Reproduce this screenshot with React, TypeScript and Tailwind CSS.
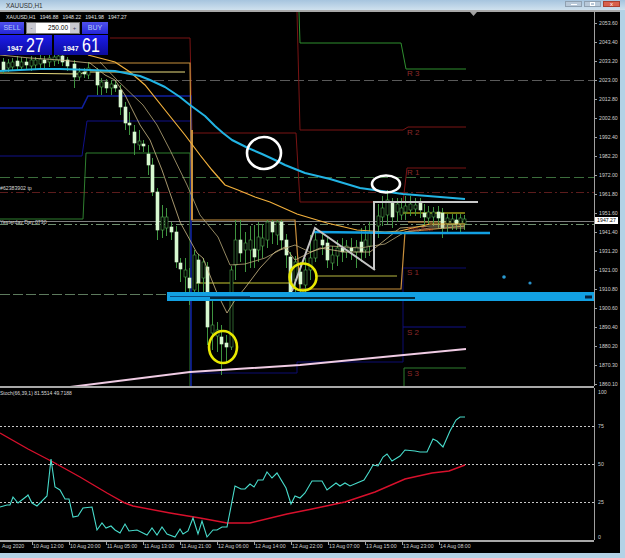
const font = { fontFamily: '"Liberation Sans", Arial, sans-serif' };

// x, body top, body bottom, high, low, bull
const candles: number[][] = [
  [3, 62, 70, 58, 74, 0], [8, 63, 68, 59, 72, 1], [12, 62, 67, 58, 71, 1], [17, 61, 66, 56, 71, 0], [21, 62, 67, 57, 70, 1],
  [26, 62, 65, 58, 70, 0], [31, 60, 66, 56, 71, 1], [35, 60, 65, 57, 70, 1], [40, 59, 64, 55, 69, 1], [44, 60, 63, 56, 68, 0],
  [49, 58, 62, 55, 67, 1], [54, 57, 61, 54, 66, 1], [58, 56, 60, 53, 64, 1], [62, 56, 62, 54, 66, 0], [67, 60, 66, 57, 71, 0],
  [74, 64, 77, 60, 88, 0], [79, 72, 77, 68, 80, 1], [84, 72, 74, 68, 78, 0], [88, 68, 75, 62, 79, 1], [97, 72, 85, 68, 95, 0],
  [101, 82, 87, 78, 95, 1], [106, 82, 88, 79, 93, 0], [111, 84, 88, 80, 95, 1], [115, 85, 88, 81, 92, 0], [120, 90, 107, 85, 115, 0],
  [125, 107, 123, 102, 130, 0], [129, 123, 125, 112, 135, 0], [134, 132, 143, 125, 155, 0], [139, 141, 145, 130, 150, 1], [143, 144, 146, 140, 152, 0],
  [148, 154, 165, 145, 175, 0], [152, 165, 192, 158, 196, 0], [157, 192, 230, 188, 240, 0], [162, 217, 230, 205, 238, 1], [166, 217, 228, 208, 236, 1],
  [171, 227, 232, 222, 240, 0], [176, 232, 262, 226, 268, 0], [180, 263, 269, 258, 282, 0], [185, 270, 277, 258, 300, 1], [189, 278, 288, 268, 305, 0],
  [194, 255, 290, 250, 296, 1], [198, 260, 283, 254, 292, 0], [203, 262, 278, 258, 296, 1], [207, 267, 327, 262, 345, 0], [212, 325, 333, 300, 350, 1],
  [217, 330, 336, 322, 352, 1], [221, 337, 344, 325, 375, 0], [226, 343, 347, 335, 362, 0], [231, 270, 347, 266, 350, 1], [235, 240, 265, 220, 280, 1],
  [240, 240, 253, 220, 262, 0], [245, 243, 250, 232, 272, 1], [250, 240, 250, 226, 268, 1], [254, 249, 257, 225, 268, 0], [258, 237, 250, 222, 262, 1],
  [262, 238, 246, 224, 258, 1], [267, 222, 240, 220, 248, 1], [272, 222, 232, 220, 244, 0], [277, 222, 235, 220, 245, 1], [281, 222, 240, 220, 250, 0],
  [286, 240, 255, 234, 268, 0], [290, 257, 292, 252, 296, 0], [295, 262, 280, 256, 296, 1], [300, 272, 284, 262, 296, 0], [305, 270, 285, 258, 296, 1],
  [310, 258, 270, 235, 280, 1], [315, 240, 258, 232, 262, 1], [322, 240, 245, 232, 255, 0], [327, 243, 260, 236, 268, 0], [332, 255, 263, 246, 270, 1],
  [337, 248, 256, 240, 266, 1], [342, 248, 252, 238, 262, 0], [346, 246, 252, 240, 258, 1], [351, 248, 251, 238, 260, 0], [356, 247, 252, 240, 268, 1],
  [361, 242, 252, 228, 262, 0], [365, 240, 250, 226, 258, 1], [369, 232, 246, 222, 256, 1], [378, 216, 226, 204, 238, 1], [382, 208, 217, 196, 226, 1],
  [387, 200, 215, 190, 224, 1], [392, 202, 217, 198, 228, 0], [397, 204, 212, 198, 222, 1], [401, 208, 215, 198, 220, 1], [405, 206, 212, 196, 220, 1],
  [410, 204, 210, 196, 216, 1], [415, 205, 209, 198, 216, 1], [420, 202, 210, 198, 218, 0], [424, 213, 217, 204, 226, 0], [428, 212, 218, 206, 224, 1],
  [433, 212, 217, 207, 226, 1], [438, 212, 218, 206, 228, 0], [442, 213, 228, 208, 238, 0], [447, 218, 224, 214, 232, 1], [452, 219, 224, 214, 230, 1],
  [456, 220, 224, 214, 230, 0], [460, 218, 224, 214, 232, 1], [464, 219, 224, 215, 230, 1],
];

const maCyan = '0,71 20,70 40,69 60,69 90,70 115,71 130,74 140,76 150,80 165,87 180,97 190,105 205,116 215,126 223,133 232,140 248,148 262,154 275,160 285,165 305,173 330,179 360,188 403,194 465,199';
const maOrange = '88,55 115,62 130,72 145,85 165,110 185,135 200,155 212,170 225,185 238,190 255,197 270,202 297,214 327,223 357,230 385,232 400,231 430,224 465,224';
const maFast = '0,55 30,58 60,60 90,63 105,75 115,80 125,95 140,125 150,140 162,170 180,222 197,253 203,258 217,293 227,313 235,300 245,288 260,268 275,252 285,247 295,260 305,255 320,248 345,252 370,252 385,240 400,228 430,226 465,226';
const maSlow = '100,62 117,80 143,105 157,125 170,150 187,185 200,215 218,237 230,265 245,264 265,258 280,250 295,245 310,252 330,246 360,248 385,244 405,232 430,228 465,228';

const stochMain = '0,507 7,505 10,505 13,497 18,503 27,496 28,495 32,503 37,506 47,496 51,459 55,487 60,490 65,499 69,499 73,517 78,516 83,508 92,507 97,530 102,523 106,528 111,526 115,530 120,533 125,524 129,531 137,530 147,535 152,528 157,535 162,527 167,534 175,537 180,529 183,534 188,531 193,518 198,534 202,521 207,537 213,530 217,530 222,527 227,527 235,486 241,489 245,489 250,484 254,487 258,480 263,480 267,472 272,478 277,473 286,488 291,504 295,496 300,498 305,493 312,481 322,481 327,490 336,483 340,486 345,483 350,486 357,483 364,480 369,472 373,465 378,466 383,457 387,454 392,461 400,456 405,450 415,451 420,452 427,452 433,439 437,441 443,447 450,431 456,420 460,417 465,417';
const stochSignal = '0,433 28,449 53,462 80,477 107,493 125,503 133,506 170,513 200,518 227,523 250,523 287,514 312,509 345,502 375,492 405,479 432,473 449,471 465,465';

const prices = ['2053.60', '2043.40', '2033.20', '2023.00', '2012.80', '2002.60', '1992.40', '1982.20', '1972.00', '1961.80', '1951.60', '1941.40', '1931.20', '1921.00', '1910.80', '1900.60', '1890.40', '1880.20', '1870.30', '1860.10'];
const times = ['10 Aug 12:00', '10 Aug 20:00', '11 Aug 05:00', '11 Aug 13:00', '11 Aug 21:00', '12 Aug 06:00', '12 Aug 14:00', '12 Aug 22:00', '13 Aug 07:00', '13 Aug 15:00', '13 Aug 23:00', '14 Aug 08:00'];
const pivots = [['R 3', 76], ['R 2', 135], ['R 1', 175], ['S 1', 275], ['S 2', 335], ['S 3', 376]] as const;

function PriceChart() {
  return (
    <svg className="block w-full h-full" viewBox="0 12 594 374" fill="none">
      {/* horizontal levels */}
      <line x1="0" y1="80.5" x2="594" y2="80.5" stroke="#5a5a5a" strokeWidth="1" strokeDasharray="10 4" />
      <line x1="0" y1="177.5" x2="594" y2="177.5" stroke="#3c6e3c" strokeWidth="1" strokeDasharray="10 4" />
      <line x1="0" y1="192.5" x2="594" y2="192.5" stroke="#5c1c1c" strokeWidth="1" strokeDasharray="8 3 2 3" />
      <line x1="0" y1="221.5" x2="594" y2="221.5" stroke="#808080" strokeWidth="1" />
      <line x1="0" y1="224.5" x2="594" y2="224.5" stroke="#6f8f6f" strokeWidth="1" strokeDasharray="8 3 2 3" />
      <line x1="0" y1="294.5" x2="170" y2="294.5" stroke="#5d7a5d" strokeWidth="1" strokeDasharray="10 3" />

      {/* pivot steps */}
      <g strokeWidth="1">
        <polyline points="0,219 83,219 86,153 190,153 190,386" stroke="#2f7f2f" />
        <polyline points="299,12 300,43 401,43 406,69 466,69" stroke="#2f8f2f" />
        <polyline points="404,386 404,368 466,368" stroke="#2f7f2f" />
        <polyline points="110,38 190,38 192,133 296,133 300,202 403,202 407,168 466,168" stroke="#7a1414" />
        <polyline points="297,12 300,130 403,130 408,127 466,127" stroke="#7a1414" />
        <polyline points="0,108 82,108 88,96 191,96 191,386" stroke="#1020a0" strokeWidth="1.6" />
        <polyline points="0,156 82,156 87,121 190,121" stroke="#10108a" />
        <polyline points="191,373 297,373 297,362 403,362 403,268 466,268" stroke="#0c0c70" />
        <polyline points="403,327 466,327" stroke="#10108a" />
        <polyline points="88,63 190,63 192,220 295,220 300,289 401,289 405,232 465,226" stroke="#c88f3c" strokeWidth="1.2" />
        <polyline points="192,130 192,220" stroke="#c88f3c" strokeWidth="2" />
        <polyline points="0,73 80,74 85,72 185,72" stroke="#ecdf80" />
        <polyline points="193,283 290,283" stroke="#c8c832" strokeWidth="1.2" />
        <polyline points="315,276 397,276" stroke="#b8b840" strokeWidth="1.2" />
        <polyline points="403,213 465,213" stroke="#e8e820" strokeWidth="1.2" />
        <polyline points="408,222 465,222" stroke="#d89a40" />
      </g>

      {/* bars */}
      {candles.map(([x, top, bot, hi, lo, bull]) => (
        <g key={x}>
          <line x1={x + 0.5} y1={hi} x2={x + 0.5} y2={lo} stroke="#3f9440" />
          <rect x={x - 1} y={top} width="3" height={bot - top} fill={bull ? '#000' : '#d8f8d0'} stroke={bull ? '#4ea64e' : '#d8f8d0'} strokeWidth="0.6" />
        </g>
      ))}

      {/* moving averages */}
      <polyline points={maSlow} stroke="#b8a878" strokeWidth="0.8" />
      <polyline points={maFast} stroke="#d0bc88" strokeWidth="0.8" />
      <polyline points={maOrange} stroke="#f2b03c" strokeWidth="1.2" />
      <polyline points={maCyan} stroke="#22b4e4" strokeWidth="2" strokeLinejoin="round" />
      <polyline points="70,387 190,372 300,365 466,349" stroke="#f0cce4" strokeWidth="2" />

      {/* hand drawn objects */}
      <rect x="167" y="292" width="427" height="9" fill="#12a0e2" />
      <line x1="170" y1="296.5" x2="250" y2="296.5" stroke="#0a4a80" strokeWidth="1" />
      <line x1="210" y1="298" x2="415" y2="298" stroke="#000" strokeWidth="1.4" />
      <rect x="585" y="295.5" width="7" height="3" fill="#04203c" />
      <polyline points="313,232 405,233 490,233" stroke="#12a0e2" strokeWidth="2.6" />
      <polyline points="292,291 315,228 375,270" stroke="#c4c4c4" strokeWidth="2" />
      <polyline points="374,270 374,202 478,202" stroke="#c8c8c8" strokeWidth="2" />
      <ellipse cx="264" cy="153" rx="17" ry="16" stroke="#fff" strokeWidth="2.6" />
      <ellipse cx="386" cy="184" rx="14" ry="8.5" stroke="#fff" strokeWidth="2.6" />
      <ellipse cx="303" cy="277" rx="13.5" ry="13.5" stroke="#e8e800" strokeWidth="2.6" />
      <ellipse cx="223" cy="347" rx="14" ry="16" stroke="#e8e800" strokeWidth="2.6" />
      <circle cx="504" cy="277" r="1.8" fill="#2a9ad0" />
      <circle cx="530" cy="283" r="1.6" fill="#2a90c8" />
      <polygon points="470,12 477,12 473.5,16" fill="#a0a0a0" />

      {/* labels */}
      <g style={font}>
        {pivots.map(([label, y]) => (
          <text key={label} x="407" y={y} fontSize="8" fill="#8c2a2a">{label}</text>
        ))}
        <text x="0" y="190" fontSize="5.2" fill="#d8d8d8">#62383902 tp</text>
        <text x="0" y="224" fontSize="5.2" fill="#d0d0d0">Yesterday Day 0730</text>
        <text x="408" y="231" fontSize="5.2" fill="#a83c2c">Daily Pivot</text>
      </g>
    </svg>
  );
}

function StochChart() {
  return (
    <svg className="block w-full h-full" viewBox="0 388 594 152" fill="none">
      {[426.5, 464.5, 502.5].map((y) => (
        <line key={y} x1="0" y1={y} x2="594" y2={y} stroke="#c8c8c8" strokeWidth="1" strokeDasharray="2 2" />
      ))}
      <polyline points={stochSignal} stroke="#d8102c" strokeWidth="1.4" />
      <polyline points={stochMain} stroke="#48dccc" strokeWidth="1.1" />
    </svg>
  );
}

function Quote({ value, pad }: { value: string; pad: string }) {
  return (
    <div className={`flex items-end gap-[3px] bg-gradient-to-b from-[#1c1cec] to-[#0c0c9c] text-white leading-none ${pad}`}>
      <span className="text-[7px] font-bold pb-[3px]">1947</span>
      <span className="inline-block w-[18px] text-[20px] leading-[19px] scale-x-[0.8] origin-left">{value}</span>
    </div>
  );
}

function TradePanel() {
  return (
    <div className="absolute left-0 top-[10px] w-[108px] flex flex-col gap-px" style={font}>
      <div className="flex h-[12px] items-stretch gap-[2px]">
        <div className="w-[24px] bg-gradient-to-b from-[#5050ec] to-[#2424d8] text-[#b8c8f8] text-[7px] leading-[12px] text-center">SELL</div>
        <div className="w-[54px] flex items-center bg-white border border-[#777]">
          <span className="w-[9px] h-full bg-[#c8c8d0] text-[#446] text-[6px] leading-[10px] text-center">-</span>
          <span className="flex-1 text-black text-[6.5px] text-right pr-[2px]">250.00</span>
          <span className="w-[9px] h-full bg-[#c8c8d0] text-[#446] text-[6px] leading-[10px] text-center">+</span>
        </div>
        <div className="flex-1 bg-gradient-to-b from-[#5050ec] to-[#2424d8] text-[#b8c8f8] text-[7px] leading-[12px] text-center">BUY</div>
      </div>
      <div className="grid grid-cols-[52px_54px] gap-[2px] h-[20px]">
        <Quote value="27" pad="pl-[7px]" />
        <Quote value="61" pad="pl-[9px]" />
      </div>
    </div>
  );
}

export default function App() {
  return (
    <div className="w-[625px] h-[558px] flex flex-col overflow-hidden bg-[#b4d2e6]" style={font}>
      {/* window title */}
      <div className="h-[10px] flex justify-between items-end bg-gradient-to-b from-[#a6c4de] to-[#cfe1ee] overflow-hidden">
        <span className="pl-[6px] text-[6.4px] leading-[8px] text-[#333]">XAUUSD,H1</span>
        <div className="flex gap-[2px] pr-[5px] pb-[3px]">
          <div className="w-[17px] h-[6px] bg-[#b8c8d8] border border-[#8fa0b0] flex items-center justify-center"><span className="block w-[6px] h-px bg-white" /></div>
          <div className="w-[17px] h-[6px] bg-[#b8c8d8] border border-[#8fa0b0] flex items-center justify-center"><span className="block w-[5px] h-[4px] border border-white" /></div>
          <div className="w-[17px] h-[6px] bg-[#d8604c] border border-[#a84030] text-white text-[6px] leading-[5px] text-center">x</div>
        </div>
      </div>

      <div className="flex flex-col bg-black mr-[5px] h-[543px] border-t-2 border-[#a8a8a8] relative">
        {/* main pane */}
        <div className="flex h-[374px]">
          <div className="relative w-[594px] shrink-0">
            <PriceChart />
            <div className="absolute left-[6px] top-[1px] flex gap-[4px] text-[5.2px] leading-[8px] text-[#e0e0e0] whitespace-nowrap">
              <span>XAUUSD,H1</span>
              <span>1946.88</span>
              <span>1948.22</span>
              <span>1941.98</span>
              <span>1947.27</span>
            </div>
            <TradePanel />
          </div>
          <div className="relative flex-1 border-l border-[#a0a0a0] flex flex-col pt-[2px] text-[5.2px] text-[#d0d0d0]">
            {prices.map((p) => (
              <div key={p} className="h-[19px] shrink-0 flex items-center gap-[1px]">
                <span className="block w-[2px] h-px bg-[#a0a0a0]" />
                <span className="pl-[1px]">{p}</span>
              </div>
            ))}
            <div className="absolute left-0 top-[205px] w-[23px] h-[7px] bg-white text-black text-[5.2px] leading-[7px] text-center">1947.27</div>
          </div>
        </div>

        <div className="h-[2px] w-[594px] bg-[#a8a8a8]" />

        {/* stochastic pane */}
        <div className="flex h-[152px]">
          <div className="relative w-[594px] shrink-0">
            <StochChart />
            <div className="absolute left-0 top-[2px] text-[5px] leading-[7px] text-[#d8d8d8] whitespace-nowrap">Stoch(66,39,1) 81.5514 49.7188</div>
          </div>
          <div className="flex-1 border-l border-[#a0a0a0] flex flex-col pl-[3px] text-[5.2px] leading-[7px] text-[#d0d0d0]">
            <span className="mt-[1px]">100</span>
            <span className="mt-[27px]">75</span>
            <span className="mt-[31px]">50</span>
            <span className="mt-[31px]">25</span>
            <span className="mt-[28px]">0</span>
          </div>
        </div>

        <div className="h-[2px] w-[594px] bg-[#a8a8a8]" />

        {/* time axis */}
        <div className="flex text-[5.2px] leading-[8px] text-[#d0d0d0] whitespace-nowrap">
          <span className="w-[32px] shrink-0 pl-[2px]">Aug 2020</span>
          {times.map((t) => (
            <span key={t} className="relative w-[37px] shrink-0 pl-[1px]">
              <span className="absolute left-0 top-0 w-px h-[3px] bg-[#a0a0a0]" />
              {t}
            </span>
          ))}
        </div>
      </div>
    </div>
  );
}
